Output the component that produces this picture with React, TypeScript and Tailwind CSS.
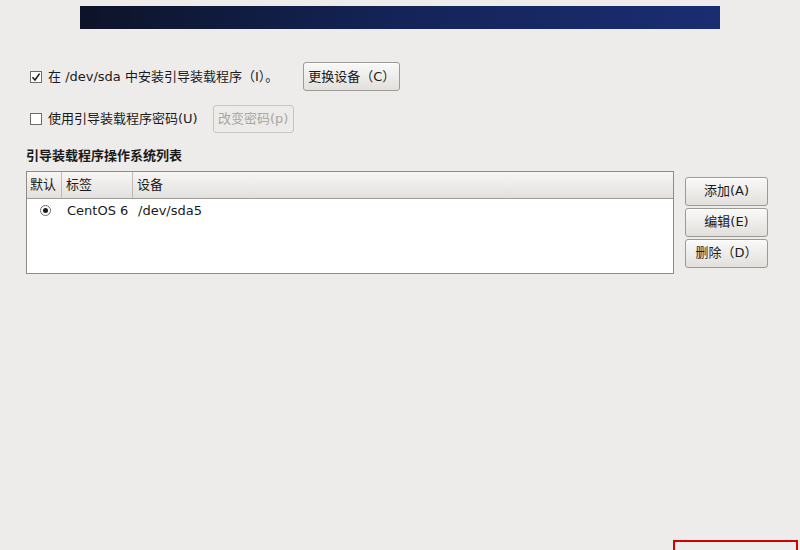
import React from 'react';

const font = { fontFamily: '"DejaVu Sans", "Noto Sans CJK SC", sans-serif' };

const GtkButton = ({ label, disabled, className = '' }: { label: string; disabled?: boolean; className?: string }) => (
  <button
    className={`flex items-center justify-center rounded-[3px] border text-[13px] ${
      disabled
        ? 'border-[#c8c6c3] bg-[#ecebe9] text-[#a8a6a3]'
        : 'border-[#9d9a96] bg-gradient-to-b from-[#f9f9f8] to-[#e2e0dd] text-[#1a1a1a] shadow-[0_1px_0_#fff_inset]'
    } ${className}`}
  >
    {label}
  </button>
);

const CheckBox = ({ checked }: { checked?: boolean }) => (
  <span className="flex h-[12px] w-[12px] items-center justify-center border border-[#6e6c69] bg-white">
    {checked && (
      <svg width="10" height="10" viewBox="0 0 10 10">
        <path d="M1.5 5.2 L4 8 L8.6 1.6" fill="none" stroke="#1c1c1c" strokeWidth="1.6" />
      </svg>
    )}
  </span>
);

const rows = [{ label: 'CentOS 6', device: '/dev/sda5', isDefault: true }];

export default function App() {
  return (
    <div className="relative h-[550px] w-[800px] overflow-hidden bg-[#edeceb] text-[#1a1a1a]" style={font}>
      <div className="mx-[80px] mt-[6px] h-[23px] bg-gradient-to-r from-[#0d1328] via-[#142459] to-[#1a2d72]" />

      <div className="flex flex-col pl-[30px] pt-[33px]">
        <div className="flex h-[29px] items-center">
          <CheckBox checked />
          <span className="ml-[6px] text-[13px]">在 /dev/sda 中安装引导装载程序（I）。</span>
          <GtkButton label="更换设备（C）" className="ml-[25px] h-[29px] w-[97px]" />
        </div>
        <div className="mt-[14px] flex h-[28px] items-center">
          <CheckBox />
          <span className="ml-[6px] text-[13px]">使用引导装载程序密码(U)</span>
          <GtkButton label="改变密码(p)" disabled className="ml-[15px] h-[28px] w-[81px]" />
        </div>
      </div>

      <div className="mt-[13px] pl-[26px] text-[13px] font-bold">引导装载程序操作系统列表</div>

      <div className="mt-[5px] flex items-start pl-[26px]">
        <div className="h-[103px] w-[648px] border border-[#8f8c88] bg-white">
          <div className="flex h-[27px] items-center border-b border-[#a09d99] bg-gradient-to-b from-[#f7f6f5] to-[#e3e1de] text-[13px]">
            <div className="flex h-full w-[35px] items-center border-r border-[#bdbab6] pl-[3px]">默认</div>
            <div className="flex h-full w-[71px] items-center border-r border-[#bdbab6] pl-[4px]">标签</div>
            <div className="flex h-full flex-1 items-center pl-[4px]">设备</div>
          </div>
          {rows.map((r, i) => (
            <div key={i} className="flex h-[24px] items-center text-[13px]">
              <div className="flex w-[35px] justify-center">
                <span className="ml-[1px] flex h-[11px] w-[11px] items-center justify-center rounded-full border border-[#6e6c69] bg-white">
                  {r.isDefault && <span className="h-[5px] w-[5px] rounded-full bg-[#1c1c1c]" />}
                </span>
              </div>
              <div className="w-[71px] pl-[5px]">{r.label}</div>
              <div className="pl-[5px]">{r.device}</div>
            </div>
          ))}
        </div>

        <div className="ml-[11px] mt-[6px] flex flex-col gap-[2px]">
          <GtkButton label="添加(A)" className="h-[29px] w-[83px]" />
          <GtkButton label="编辑(E)" className="h-[29px] w-[83px]" />
          <GtkButton label="删除（D）" className="h-[29px] w-[83px]" />
        </div>
      </div>

      <div className="absolute left-[673px] top-[540px] h-[20px] w-[125px] border-2 border-[#d40000]" />
    </div>
  );
}
